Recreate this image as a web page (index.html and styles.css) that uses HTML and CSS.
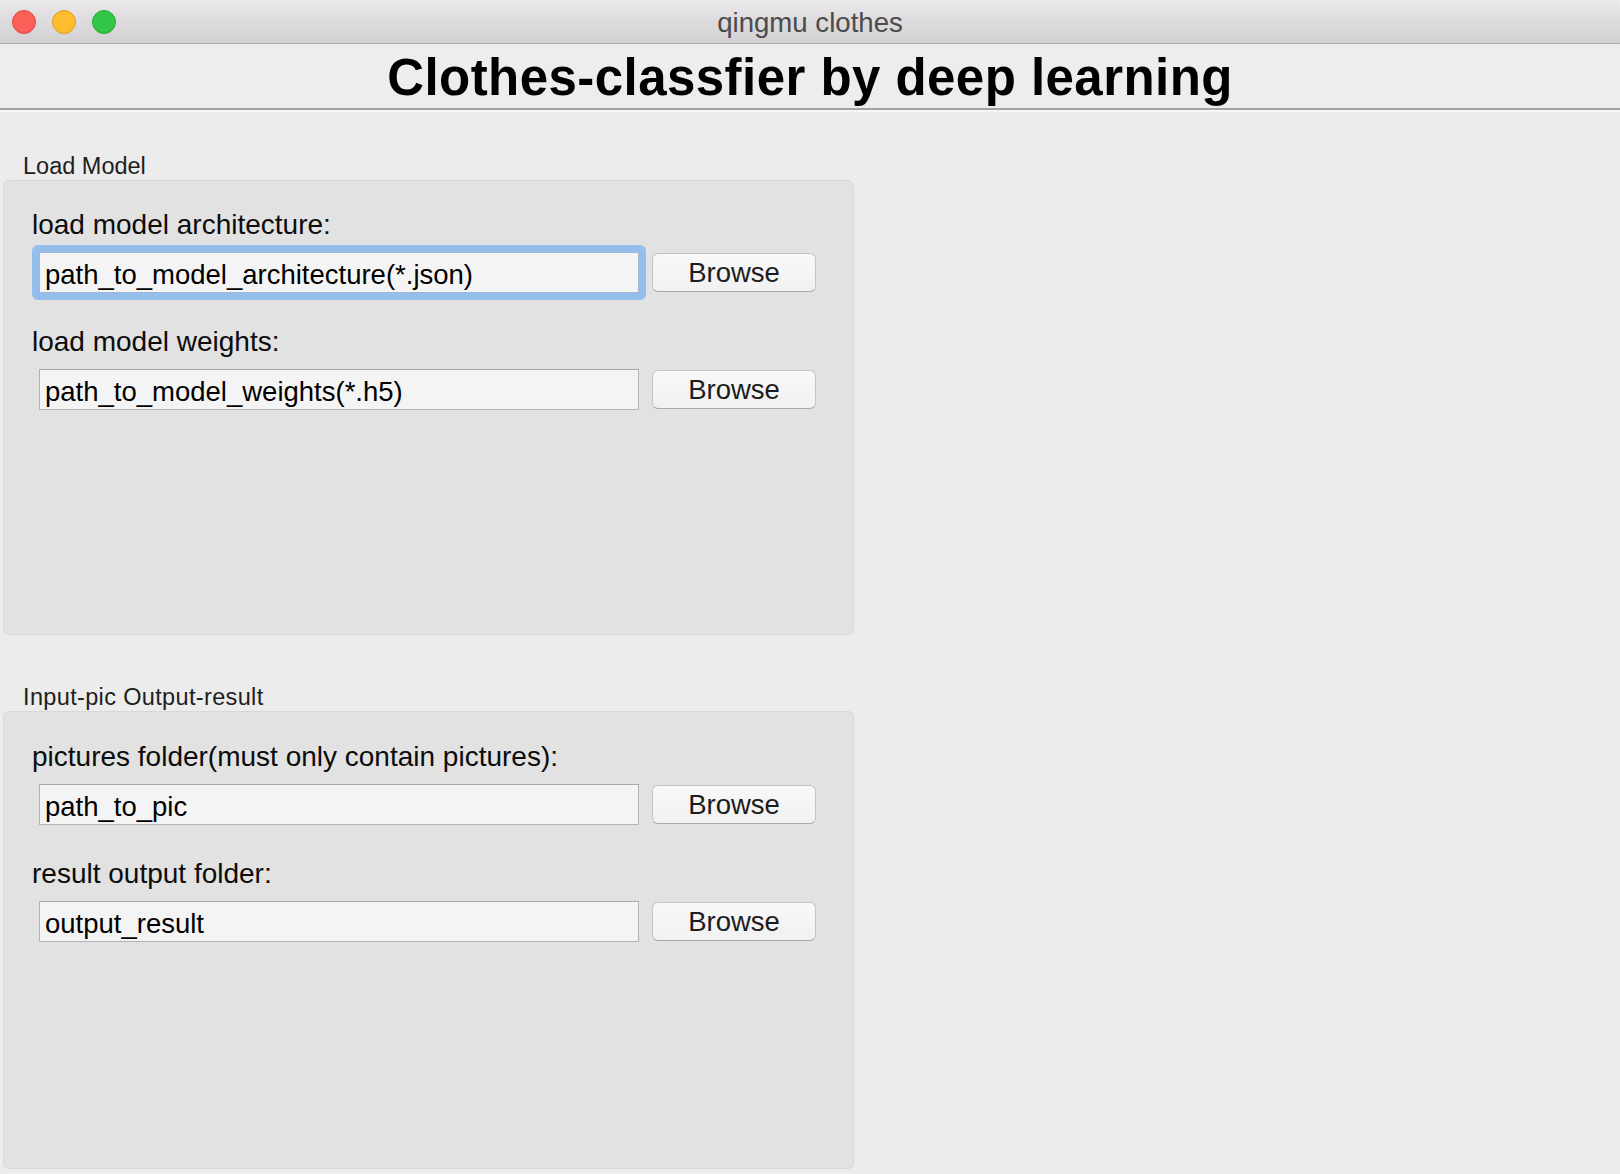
FILE: index.html
```html
<!DOCTYPE html>
<html>
<head>
<meta charset="utf-8">
<title>qingmu clothes</title>
<link rel="stylesheet" href="styles.css">
</head>
<body>
<div class="window">
  <div class="titlebar">
    <div class="lights">
      <span class="light red"></span>
      <span class="light yellow"></span>
      <span class="light green"></span>
    </div>
    <div class="win-title">qingmu clothes</div>
  </div>
  <header class="header">
    <h1 class="heading">Clothes-classfier by deep learning</h1>
  </header>
  <main class="content">
    <section class="group">
      <div class="group-title">Load Model</div>
      <div class="group-box">
        <div class="row">
          <div class="row-label">load model architecture:</div>
          <div class="row-controls">
            <div class="focus-ring"><div class="field">path_to_model_architecture(*.json)</div></div>
            <button class="btn">Browse</button>
          </div>
        </div>
        <div class="row">
          <div class="row-label">load model weights:</div>
          <div class="row-controls">
            <div class="field">path_to_model_weights(*.h5)</div>
            <button class="btn">Browse</button>
          </div>
        </div>
      </div>
    </section>
    <section class="group group-second">
      <div class="group-title">Input-pic Output-result</div>
      <div class="group-box">
        <div class="row">
          <div class="row-label">pictures folder(must only contain pictures):</div>
          <div class="row-controls">
            <div class="field">path_to_pic</div>
            <button class="btn">Browse</button>
          </div>
        </div>
        <div class="row">
          <div class="row-label">result output folder:</div>
          <div class="row-controls">
            <div class="field">output_result</div>
            <button class="btn">Browse</button>
          </div>
        </div>
      </div>
    </section>
  </main>
</div>
</body>
</html>
```

FILE: styles.css
```css
html, body {
  margin: 0;
  padding: 0;
}
body {
  width: 1620px;
  height: 1174px;
  overflow: hidden;
  background: #ececec;
  font-family: "Liberation Sans", Arial, Helvetica, sans-serif;
  color: #111;
}
.window {
  display: flex;
  flex-direction: column;
  height: 1174px;
}
.titlebar {
  position: relative;
  height: 43px;
  border-bottom: 1px solid #acacac;
  background: linear-gradient(to bottom, #ebe9eb 0%, #dedcde 45%, #d2d0d2 100%);
  display: flex;
  align-items: center;
  justify-content: center;
  border-radius: 8px 8px 0 0;
}
.lights {
  position: absolute;
  left: 12px;
  top: 10px;
  display: flex;
  gap: 16px;
}
.light {
  width: 24px;
  height: 24px;
  border-radius: 50%;
  box-sizing: border-box;
  display: block;
}
.red { background: #fc5f57; border: 1px solid #e1463f; }
.yellow { background: #fdbd2e; border: 1px solid #dfa023; }
.green { background: #33c748; border: 1px solid #24a934; }
.win-title {
  font-size: 27.6px;
  color: #4b4b4b;
  line-height: 43px;
  padding-top: 2px;
}
.header {
  height: 64px;
  border-bottom: 2px solid #a2a2a2;
  box-shadow: 0 2px 0 #f7f7f7;
  display: flex;
  justify-content: center;
  align-items: flex-start;
  background: #ededed;
}
.heading {
  margin: 0;
  font-size: 51px;
  font-weight: bold;
  color: #000;
  line-height: 58px;
  padding-top: 5px;
  letter-spacing: 0.45px;
}
.content {
  padding-top: 44px;
  padding-left: 3px;
}
.group {
  width: 851px;
}
.group-second {
  margin-top: 50px;
}
.group-title {
  font-size: 23.5px;
  line-height: 24px;
  height: 24px;
  color: #1e1e1e;
  padding-left: 20px;
  margin-bottom: 2px;
}
.group-second .group-title {
  letter-spacing: 0.35px;
}
.group-box {
  box-sizing: border-box;
  height: 455px;
  background: #e2e2e2;
  border: 1px solid #d8d8d8;
  border-radius: 6px;
  padding-top: 28px;
  display: flex;
  flex-direction: column;
  gap: 33px;
}
.group-second .group-box {
  height: 458px;
  padding-top: 29px;
}
.row-label {
  font-size: 28px;
  line-height: 32px;
  color: #0c0c0c;
  padding-left: 28px;
  margin-bottom: 11px;
}
.row-controls {
  display: flex;
  align-items: flex-end;
  padding-left: 35px;
  gap: 13px;
}
.field {
  box-sizing: border-box;
  width: 600px;
  height: 41px;
  background: #f4f4f4;
  border: 1px solid #b3b3b3;
  border-top-color: #a9a9a9;
  font-size: 27.5px;
  line-height: 43px;
  padding-left: 5px;
  color: #000;
  white-space: nowrap;
  overflow: hidden;
}
.focus-ring {
  margin: -7px;
  padding: 7px;
  border-radius: 6px;
  background: #94bfec;
  display: flex;
}
.focus-ring .field {
  border-color: #9fb7d4;
}
.btn {
  box-sizing: border-box;
  width: 164px;
  height: 39px;
  margin-bottom: 1px;
  border: 1px solid #c4c4c4;
  border-bottom-color: #aaaaaa;
  border-radius: 6px;
  background: linear-gradient(to bottom, #f8f8f8, #f1f1f1);
  font-family: "Liberation Sans", Arial, Helvetica, sans-serif;
  font-size: 27.5px;
  color: #1c1c1c;
  padding: 0;
  line-height: 36px;
}
```
